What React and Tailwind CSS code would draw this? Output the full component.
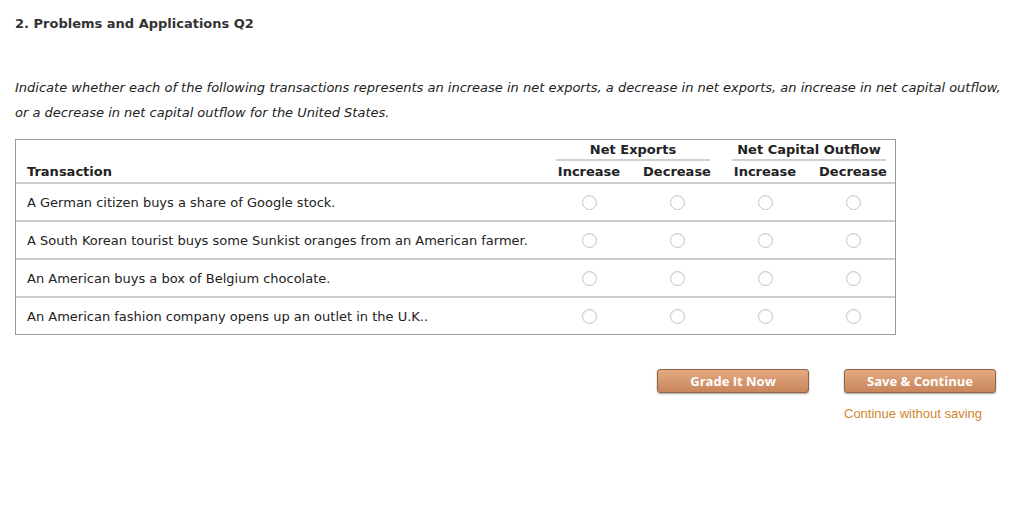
import React from "react";

const rows = [
  "A German citizen buys a share of Google stock.",
  "A South Korean tourist buys some Sunkist oranges from an American farmer.",
  "An American buys a box of Belgium chocolate.",
  "An American fashion company opens up an outlet in the U.K..",
];

function Radio() {
  return (
    <div className="flex justify-center items-center">
      <span className="block w-[15px] h-[15px] rounded-full border border-[#c4c4c4] bg-white shadow-[inset_0_1px_1px_rgba(0,0,0,0.06)]" />
    </div>
  );
}

function OrangeButton({ children }) {
  return (
    <button className="w-[152px] h-[24px] rounded-[3px] border border-[#8f6446] bg-gradient-to-b from-[#e3aa82] to-[#c9855b] text-white text-[13px] font-bold font-['Open_Sans',sans-serif] shadow-[0_1px_2px_rgba(0,0,0,0.35)] leading-none">
      {children}
    </button>
  );
}

export default function App() {
  return (
    <div className="w-[1024px] h-[506px] bg-white text-[#222] font-['DejaVu_Sans','Verdana',sans-serif] text-[13px] pt-[16px] pl-[15px]">
      <h1 className="font-bold text-[13px] text-[#333] leading-[16px]">2. Problems and Applications Q2</h1>

      <p className="italic mt-[43px] leading-[25px] text-[#222]">
        Indicate whether each of the following transactions represents an increase in net exports, a decrease in net exports, an increase in net capital outflow,
        <br />
        or a decrease in net capital outflow for the United States.
      </p>

      <div className="mt-[14px] w-[881px] border border-[#9a9a9a]">
        {/* header */}
        <div className="grid grid-cols-[529px_repeat(4,88px)] h-[44px] border-b-2 border-[#cfcfcf]">
          <div className="flex items-end pl-[11px] pb-[2px] font-bold leading-[16px]">Transaction</div>
          <div className="col-span-2 flex flex-col">
            <div className="mx-[11px] mt-[2px] text-center font-bold border-b-2 border-[#d0d0d0] pb-[1px] leading-[16px]">Net Exports</div>
            <div className="grid grid-cols-2 mt-[3px] font-bold text-center leading-[16px]">
              <span>Increase</span>
              <span>Decrease</span>
            </div>
          </div>
          <div className="col-span-2 flex flex-col">
            <div className="mx-[11px] mt-[2px] text-center font-bold border-b-2 border-[#d0d0d0] pb-[1px] leading-[16px]">Net Capital Outflow</div>
            <div className="grid grid-cols-2 mt-[3px] font-bold text-center leading-[16px]">
              <span>Increase</span>
              <span>Decrease</span>
            </div>
          </div>
        </div>

        {rows.map((text, i) => (
          <div
            key={i}
            className={
              "grid grid-cols-[529px_repeat(4,88px)] items-center " +
              (i < rows.length - 1 ? "h-[38px] border-b-2 border-[#cfcfcf]" : "h-[36px]")
            }
          >
            <div className="pl-[11px] pt-[1px]">{text}</div>
            <Radio />
            <Radio />
            <Radio />
            <Radio />
          </div>
        ))}
      </div>

      <div className="flex justify-end w-[981px] mt-[34px] gap-[35px]">
        <OrangeButton>Grade It Now</OrangeButton>
        <div className="flex flex-col items-start">
          <OrangeButton>Save &amp; Continue</OrangeButton>
          <a className="mt-[11px] text-[13px] text-[#d0852c] font-['Liberation_Sans',Arial,sans-serif]">Continue without saving</a>
        </div>
      </div>
    </div>
  );
}
